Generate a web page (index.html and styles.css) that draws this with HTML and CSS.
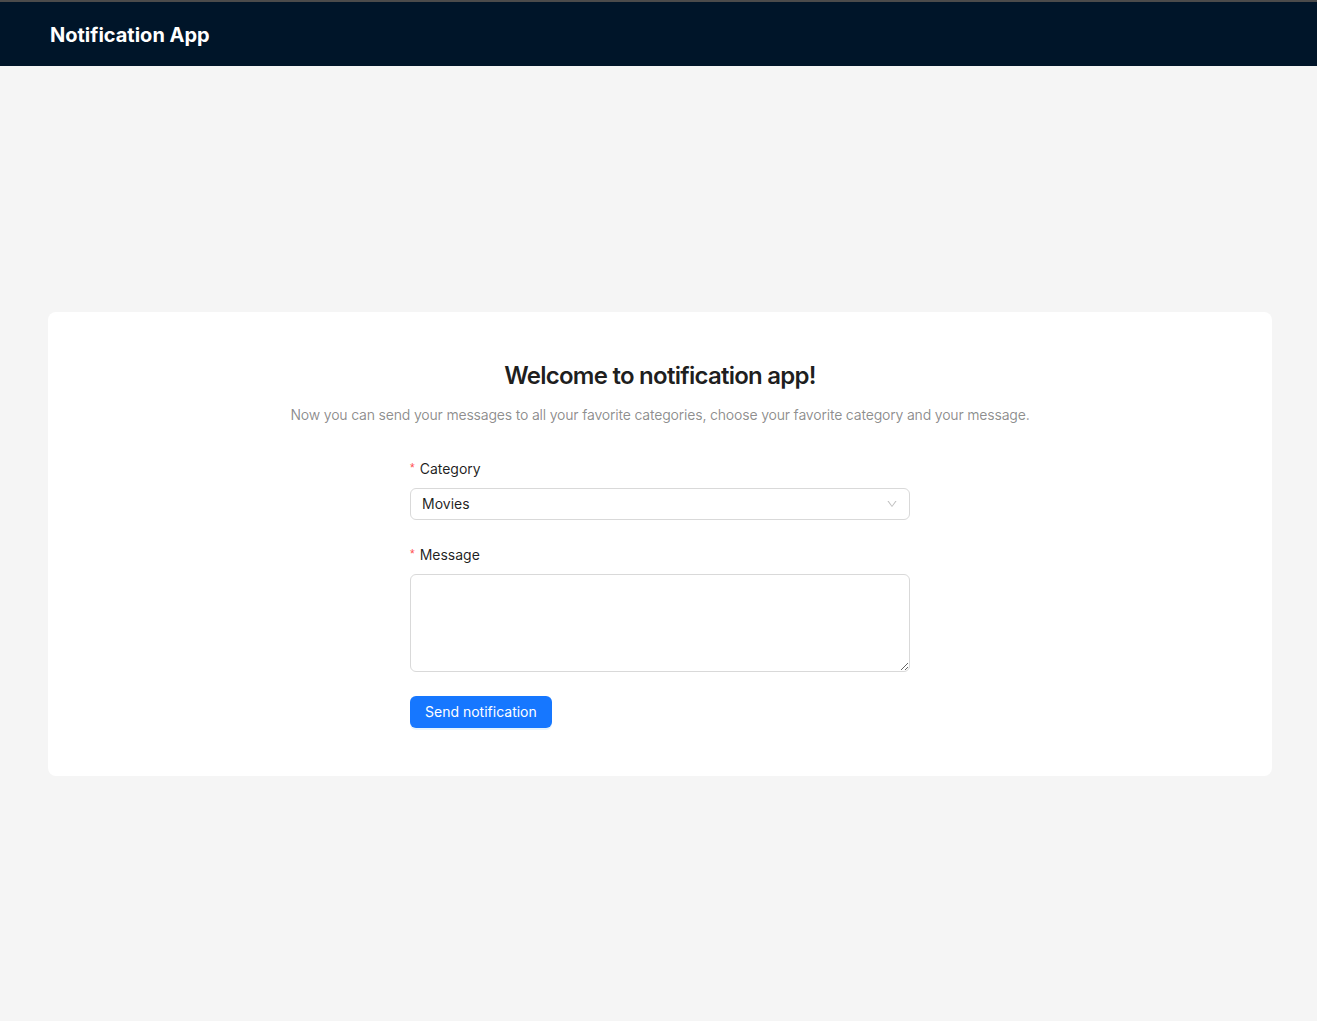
FILE: index.html
```html
<!DOCTYPE html>
<html lang="en">
<head>
<meta charset="utf-8">
<title>Notification App</title>
<link rel="stylesheet" href="styles.css">
</head>
<body>
<div class="layout">
  <header class="header">
    <div class="brand">Notification App</div>
  </header>
  <main class="content">
    <section class="card">
      <h3 class="title">Welcome to notification app!</h3>
      <p class="subtitle">Now you can send your messages to all your favorite categories, choose your favorite category and your message.</p>
      <form class="form">
        <div class="form-item">
          <label class="label"><span class="req">*</span>Category</label>
          <div class="select">
            <span class="select-value">Movies</span>
            <svg class="select-arrow" width="12" height="12" viewBox="0 0 1024 1024"><path fill="currentColor" d="M884 256h-75c-5.1 0-9.9 2.5-12.9 6.6L512 654.2 227.9 262.6c-3-4.1-7.8-6.6-12.9-6.6h-75c-6.5 0-10.3 7.4-6.5 12.7l352.6 486.1c12.8 17.6 39 17.6 51.7 0l352.6-486.1c3.9-5.3.1-12.7-6.4-12.7z"/></svg>
          </div>
        </div>
        <div class="form-item">
          <label class="label"><span class="req">*</span>Message</label>
          <textarea class="textarea" rows="4"></textarea>
        </div>
        <button type="button" class="btn">Send notification</button>
      </form>
    </section>
  </main>
</div>
</body>
</html>
```

FILE: styles.css
```css
* { box-sizing: border-box; }
html, body { margin: 0; padding: 0; height: 100%; }
body {
  font-family: Inter, "Noto Sans", "Liberation Sans", sans-serif;
  font-size: 14px;
  color: rgba(0,0,0,0.88);
  background: #f5f5f5;
  border-top: 2px solid #4b4b4b;
}
.layout {
  display: flex;
  flex-direction: column;
  min-height: 100%;
}
.header {
  height: 64px;
  background: #001529;
  padding: 0 50px;
  display: flex;
  align-items: center;
  flex: none;
}
.brand {
  color: #fff;
  font-size: 20px;
  font-weight: 700;
  letter-spacing: 0;
  padding-top: 2px;
}
.content {
  flex: 1;
  display: flex;
  flex-direction: column;
  justify-content: center;
  padding: 0 45px 0 48px;
}
.card {
  background: #fff;
  border-radius: 8px;
  padding: 48px;
  text-align: center;
}
.title {
  margin: 0 0 12px;
  font-size: 24px;
  line-height: 32px;
  font-weight: 600;
  color: rgba(0,0,0,0.88);
  letter-spacing: -0.75px;
}
.subtitle {
  margin: 0 0 32px;
  font-size: 14px;
  line-height: 22px;
  color: rgba(0,0,0,0.45);
  letter-spacing: -0.2px;
}
.form {
  width: 500px;
  margin: 0 auto;
  text-align: left;
}
.form-item {
  margin-bottom: 24px;
  display: flex;
  flex-direction: column;
}
.label {
  height: 30px;
  line-height: 22px;
  padding-bottom: 8px;
  color: rgba(0,0,0,0.88);
}
.req {
  color: #ff4d4f;
  font-family: "Liberation Sans", sans-serif;
  font-size: 12px;
  line-height: 1;
  margin-right: 5px;
  position: relative;
  top: -2px;
}
.select {
  height: 32px;
  border: 1px solid #d9d9d9;
  border-radius: 6px;
  padding: 0 11px;
  display: flex;
  align-items: center;
  justify-content: space-between;
  background: #fff;
}
.select-value { line-height: 30px; }
.select-arrow { color: rgba(0,0,0,0.25); }
.textarea {
  display: block;
  width: 100%;
  height: 98px;
  border: 1px solid #d9d9d9;
  border-radius: 6px;
  padding: 4px 11px;
  font: inherit;
  line-height: 22px;
  resize: vertical;
  outline: none;
  background: #fff;
}
.btn {
  height: 32px;
  padding: 4px 15px;
  border: none;
  border-radius: 6px;
  background: #1677ff;
  color: #fff;
  font: inherit;
  font-size: 14px;
  line-height: 22px;
  box-shadow: 0 2px 0 rgba(5,145,255,0.1);
  cursor: pointer;
}
```
